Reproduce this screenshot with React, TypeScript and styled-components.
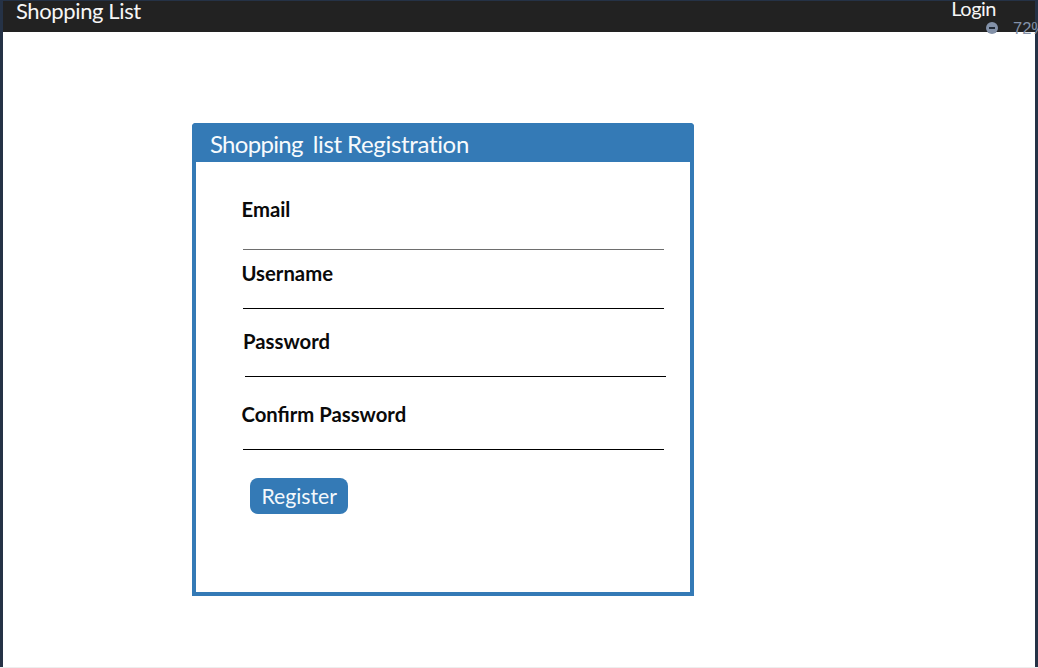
import React from "react";
import styled, { createGlobalStyle } from "styled-components";

const BLUE = "#347ab6";

const GlobalStyle = createGlobalStyle`
  * { box-sizing: border-box; }
  body { margin: 0; background: #fff; font-family: Lato, "Liberation Sans", sans-serif; overflow: hidden; }
`;

const Frame = styled.div`
  position: relative;
  width: 1038px;
  height: 668px;
  display: flex;
  flex-direction: column;
  border: solid #253246;
  border-width: 1px 3px 0;
  background: #fff;
`;

const NavBar = styled.header`
  display: flex;
  justify-content: space-between;
  flex: none;
  height: 31px;
  padding: 0 39px 0 13px;
  background: #222;
  color: #f6f6f6;
`;

const Brand = styled.span`
  font-size: 22px;
  line-height: 19px;
  letter-spacing: -0.38px;
`;

const NavLink = styled.a`
  font-size: 20px;
  line-height: 15px;
  letter-spacing: -0.5px;
`;

const Main = styled.main`
  flex: 1;
  padding: 91px 0 0 188.6px;
`;

const Card = styled.form`
  width: 502.8px;
  height: 473px;
  border: 4px solid ${BLUE};
  border-top: 0;
  border-radius: 4px 4px 0 0;
`;

const CardTitle = styled.h1`
  height: 39px;
  margin: 0 -4px;
  padding-left: 18.4px;
  border-radius: 4px 4px 0 0;
  background: ${BLUE};
  color: #f7fafd;
  font-size: 24px;
  font-weight: 400;
  line-height: 42px;
  white-space: pre;
`;

const TitlePart = styled.span<{ $tracking: number }>`
  letter-spacing: ${(p) => p.$tracking}px;
  word-spacing: -0.5px;
`;

const Fields = styled.div`
  padding: 35px 0 0 47.4px;
`;

const Field = styled.label<{ $height: number; $shift?: number; $line?: string }>`
  display: flex;
  flex-direction: column;
  justify-content: space-between;
  width: 421.5px;
  height: ${(p) => p.$height}px;
  margin-left: ${(p) => p.$shift ?? 0}px;
  border-bottom: 1px solid ${(p) => p.$line ?? "#000"};
`;

const Label = styled.span<{ $top: number }>`
  margin: ${(p) => p.$top}px 0 0 -1.5px;
  color: #0a0a0a;
  font-size: 20.3px;
  font-weight: 700;
  line-height: 24px;
`;

const Button = styled.button`
  display: block;
  width: 98.5px;
  height: 36px;
  margin: 28px 0 0 54.4px;
  padding: 0;
  border: 0;
  border-radius: 8px;
  background: ${BLUE};
  color: #f3f8fc;
  font-family: inherit;
  font-size: 21.2px;
  line-height: 35px;
`;

const ZoomBadge = styled.div`
  position: absolute;
  top: 20px;
  left: 983px;
  display: flex;
  align-items: center;
  gap: 15px;
  height: 14px;
  color: #8391a8;
  font: 16.5px/14px "Liberation Sans", sans-serif;
  white-space: nowrap;
`;

const Edge = styled.div`
  position: absolute;
  bottom: 0;
  left: -3px;
  right: -3px;
  height: 1px;
  background: #eee;
`;

export default function App() {
  return (
    <>
      <GlobalStyle />
      <Frame>
        <NavBar>
          <Brand>Shopping List</Brand>
          <NavLink>Login</NavLink>
        </NavBar>
        <Main>
          <Card>
            <CardTitle>
              <TitlePart $tracking={-0.7}>{"Shopping  "}</TitlePart>
              <TitlePart $tracking={-0.33}>list Registration</TitlePart>
            </CardTitle>
            <Fields>
              <Field $height={53} $line="#6e6e6e"><Label $top={0}>Email</Label></Field>
              <Field $height={59}><Label $top={11}>Username</Label></Field>
              <Field $height={68} $shift={1.6}><Label $top={20}>Password</Label></Field>
              <Field $height={73}><Label $top={25}>Confirm Password</Label></Field>
            </Fields>
            <Button type="button">Register</Button>
          </Card>
        </Main>
        <ZoomBadge>
          <svg width="12" height="14" viewBox="0 0 12 14">
            <circle cx="6" cy="7" r="6" fill="#8391a8" />
            <path d="M3 7h6" stroke="#222b38" strokeWidth="2" />
          </svg>
          <span>72%</span>
        </ZoomBadge>
        <Edge />
      </Frame>
    </>
  );
}
